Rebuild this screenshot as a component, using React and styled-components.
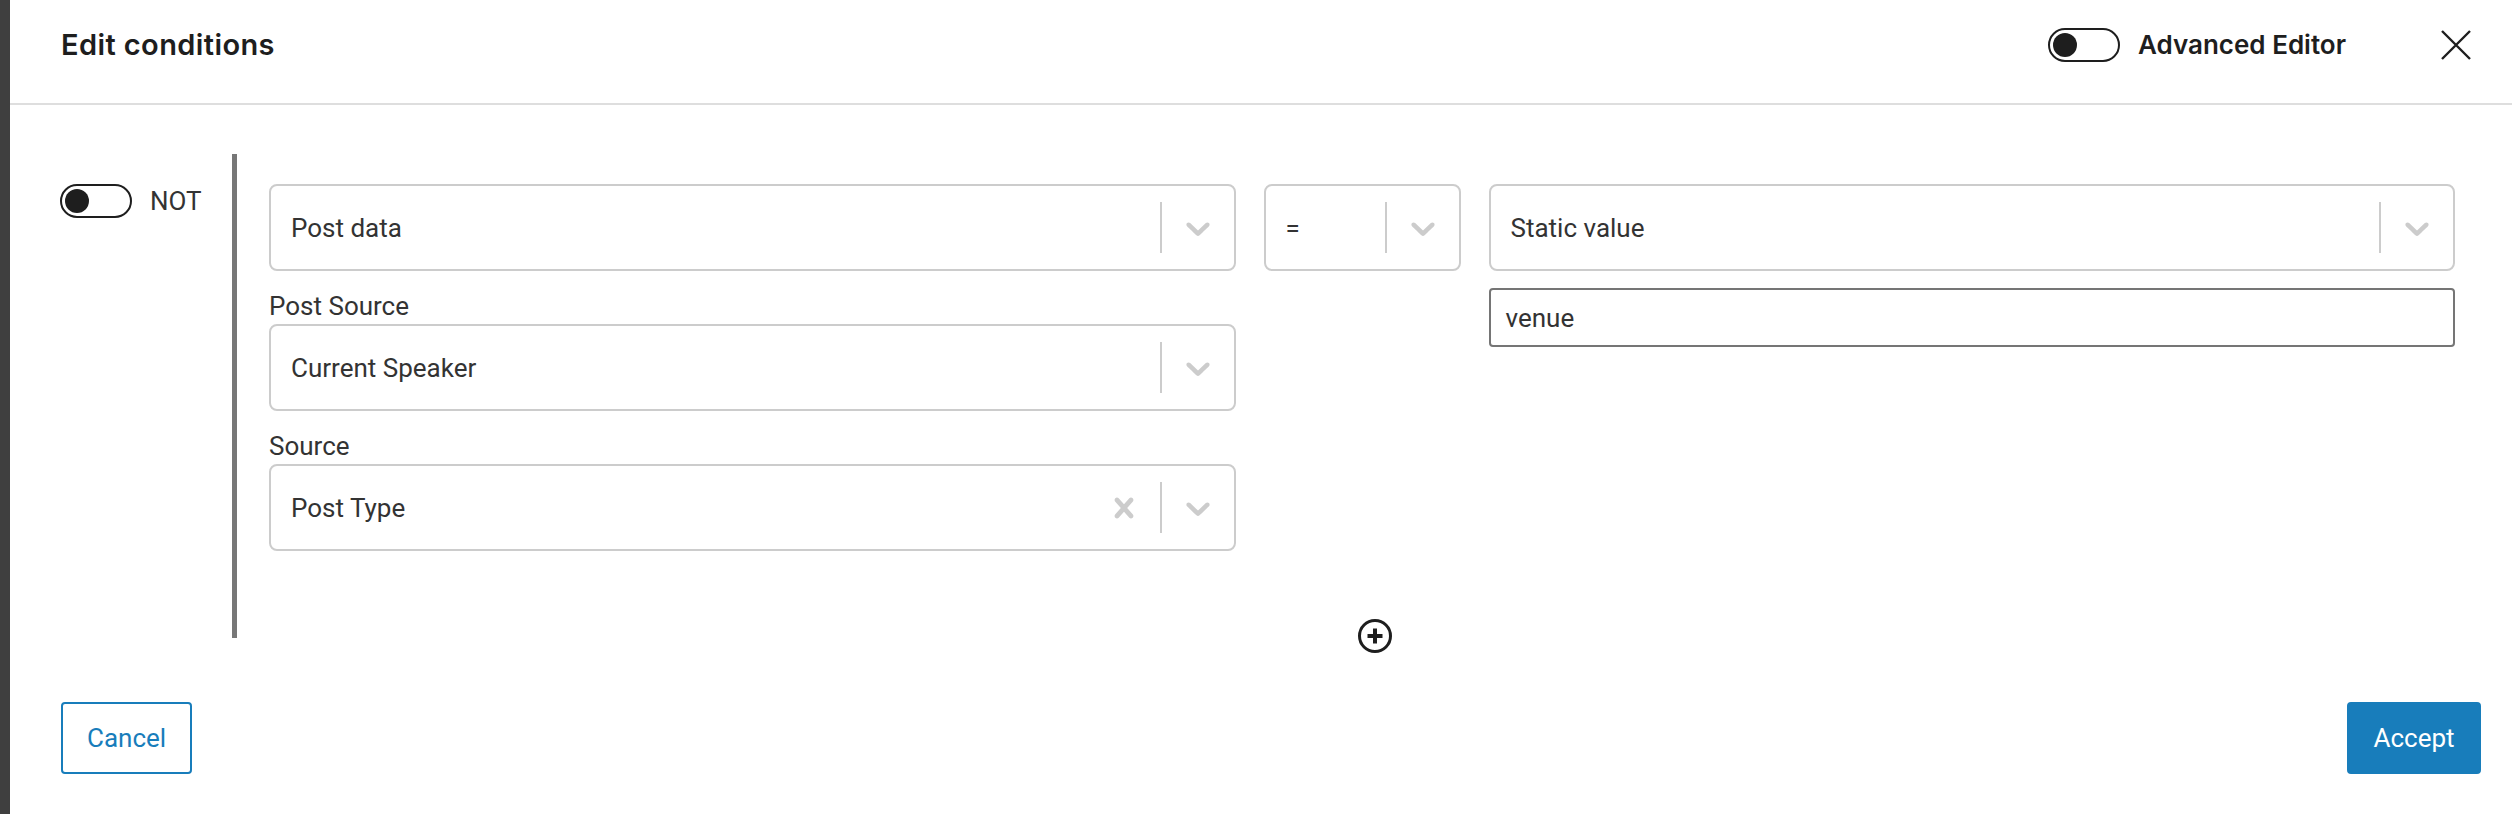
import React from 'react'
import styled, { createGlobalStyle } from 'styled-components'

const GlobalStyle = createGlobalStyle`
    html, body {
        margin: 0;
        padding: 0;
        background: #fff;
    }
    body {
        font-family: Roboto, "Liberation Sans", Arial, sans-serif;
        color: #333;
    }
    * {
        box-sizing: border-box;
    }
`

const Page = styled.div`
    display: flex;
    min-height: 814px;
    width: 2512px;
`

const Backdrop = styled.div`
    width: 10px;
    flex-shrink: 0;
    background: #3f3f3f;
`

const Modal = styled.div`
    flex: 1;
    display: flex;
    flex-direction: column;
    background: #fff;
`

const Header = styled.div`
    height: 105px;
    display: flex;
    align-items: center;
    padding: 0 38px 14px 51px;
    border-bottom: 2px solid #dedede;
`

const Title = styled.h1`
    margin: 0 auto 0 0;
    font-family: Inter, "Liberation Sans", sans-serif;
    font-size: 29px;
    font-weight: 600;
    color: #1e1e1e;
    letter-spacing: 0.4px;
`

const ToggleWrap = styled.label`
    display: flex;
    align-items: center;
    gap: 18px;
`

const Switch = styled.span`
    position: relative;
    display: inline-block;
    width: 72px;
    height: 34px;
    border: 2.5px solid #1e1e1e;
    border-radius: 18px;
    background: #fff;
    flex-shrink: 0;

    &::after {
        content: '';
        position: absolute;
        left: 2.5px;
        top: 50%;
        width: 24px;
        height: 24px;
        margin-top: -12px;
        border-radius: 50%;
        background: #1e1e1e;
    }
`

const ToggleLabel = styled.span`
    font-family: ${p => (p.$bold ? 'Inter, "Liberation Sans", sans-serif' : 'Roboto, "Liberation Sans", sans-serif')};
    font-size: 26px;
    font-weight: ${p => (p.$bold ? 600 : 400)};
    color: ${p => (p.$bold ? '#1e1e1e' : '#333')};
`

const CloseButton = styled.button`
    margin-left: 92px;
    width: 36px;
    height: 36px;
    padding: 0;
    border: 0;
    background: none;
    display: flex;
    align-items: center;
    justify-content: center;
`

const Body = styled.div`
    display: flex;
    padding: 49px 0 0 50px;
`

const LeftCol = styled.div`
    width: 172px;
    padding-top: 30px;
`

const Group = styled.div`
    flex: 1;
    border-left: 5px solid #777;
    display: flex;
    flex-direction: column;
`

const ConditionRow = styled.div`
    display: grid;
    grid-template-columns: 1fr 197px 1fr;
    column-gap: 28px;
    margin: 30px 57px 0 32px;
    align-items: start;
`

const Column = styled.div`
    display: flex;
    flex-direction: column;
`

const Field = styled.div`
    margin-top: 20px;
    display: flex;
    flex-direction: column;
`

const Label = styled.div`
    font-size: 26px;
    line-height: 30px;
    color: #333;
    margin-bottom: 3px;
`

const SelectBox = styled.div`
    height: 87px;
    display: flex;
    align-items: stretch;
    border: 2px solid #ccc;
    border-radius: 8px;
    background: #fff;
`

const SelectValue = styled.div`
    flex: 1;
    display: flex;
    align-items: center;
    padding-left: 20px;
    font-size: 26px;
    color: #333;
    white-space: nowrap;
    overflow: hidden;
`

const Indicator = styled.div`
    display: flex;
    align-items: center;
    padding: 0 16px;
    color: #ccc;
`

const Separator = styled.span`
    width: 2px;
    margin: 16px 0;
    background: #ccc;
`

const TextInput = styled.div`
    margin-top: 17px;
    height: 59px;
    display: flex;
    align-items: center;
    padding-left: 15px;
    border: 2px solid #757575;
    border-radius: 4px;
    font-size: 26px;
    color: #333;
`

const AddRow = styled.div`
    margin-top: 67px;
    height: 20px;
    display: flex;
    justify-content: center;
    align-items: flex-start;
`

const AddButton = styled.button`
    width: 36px;
    height: 36px;
    padding: 0;
    border: 0;
    background: none;
    display: flex;
`

const Footer = styled.div`
    display: flex;
    justify-content: space-between;
    align-items: center;
    margin-top: 64px;
    padding: 0 31px 0 51px;
`

const Button = styled.button`
    height: 72px;
    min-width: ${p => (p.$primary ? '134px' : '130px')};
    padding: 0 24px;
    border-radius: 4px;
    font-family: Roboto, "Liberation Sans", sans-serif;
    font-size: 26px;
    border: 2.5px solid #187dbb;
    background: ${p => (p.$primary ? '#187dbb' : '#fff')};
    color: ${p => (p.$primary ? '#fff' : '#187dbb')};
`

const Chevron = () => (
    <svg width="40" height="40" viewBox="0 0 20 20" fill="currentColor">
        <path d="M4.516 7.548c0.436-0.446 1.043-0.481 1.576 0l3.908 3.747 3.908-3.747c0.533-0.481 1.141-0.446 1.574 0 0.436 0.445 0.408 1.197 0 1.615-0.406 0.418-4.695 4.502-4.695 4.502-0.217 0.223-0.502 0.335-0.787 0.335s-0.57-0.112-0.789-0.335c0 0-4.287-4.084-4.695-4.502s-0.436-1.17 0-1.615z" />
    </svg>
)

const Cross = () => (
    <svg width="40" height="40" viewBox="0 0 20 20" fill="currentColor">
        <path d="M14.348 14.849c-0.469 0.469-1.229 0.469-1.697 0l-2.651-3.030-2.651 3.029c-0.469 0.469-1.229 0.469-1.697 0-0.469-0.469-0.469-1.229 0-1.697l2.758-3.15-2.759-3.152c-0.469-0.469-0.469-1.228 0-1.697s1.228-0.469 1.697 0l2.652 3.031 2.651-3.031c0.469-0.469 1.228-0.469 1.697 0s0.469 1.229 0 1.697l-2.758 3.152 2.758 3.15c0.469 0.469 0.469 1.229 0 1.698z" />
    </svg>
)

const Select = ({ value, clearable }) => (
    <SelectBox>
        <SelectValue>{value}</SelectValue>
        {clearable && (
            <Indicator>
                <Cross />
            </Indicator>
        )}
        <Separator />
        <Indicator>
            <Chevron />
        </Indicator>
    </SelectBox>
)

const App = () => {
    return (
        <Page>
            <GlobalStyle />
            <Backdrop />
            <Modal>
                <Header>
                    <Title>Edit conditions</Title>
                    <ToggleWrap>
                        <Switch />
                        <ToggleLabel $bold>Advanced Editor</ToggleLabel>
                    </ToggleWrap>
                    <CloseButton aria-label="Close">
                        <svg width="30" height="30" viewBox="0 0 30 30" stroke="#1e1e1e" strokeWidth="2.4" fill="none">
                            <path d="M1 1L29 29M29 1L1 29" />
                        </svg>
                    </CloseButton>
                </Header>

                <Body>
                    <LeftCol>
                        <ToggleWrap>
                            <Switch />
                            <ToggleLabel>NOT</ToggleLabel>
                        </ToggleWrap>
                    </LeftCol>
                    <Group>
                        <ConditionRow>
                            <Column>
                                <Select value="Post data" />
                                <Field>
                                    <Label>Post Source</Label>
                                    <Select value="Current Speaker" />
                                </Field>
                                <Field>
                                    <Label>Source</Label>
                                    <Select value="Post Type" clearable />
                                </Field>
                            </Column>
                            <Column>
                                <Select value="=" />
                            </Column>
                            <Column>
                                <Select value="Static value" />
                                <TextInput>venue</TextInput>
                            </Column>
                        </ConditionRow>
                        <AddRow>
                            <AddButton aria-label="Add condition">
                                <svg width="36" height="36" viewBox="0 0 36 36" fill="none" stroke="#1e1e1e">
                                    <circle cx="18" cy="18" r="15.5" strokeWidth="3" />
                                    <path d="M18 10.5V25.5M10.5 18H25.5" strokeWidth="4" />
                                </svg>
                            </AddButton>
                        </AddRow>
                    </Group>
                </Body>

                <Footer>
                    <Button>Cancel</Button>
                    <Button $primary>Accept</Button>
                </Footer>
            </Modal>
        </Page>
    )
}

export default App
